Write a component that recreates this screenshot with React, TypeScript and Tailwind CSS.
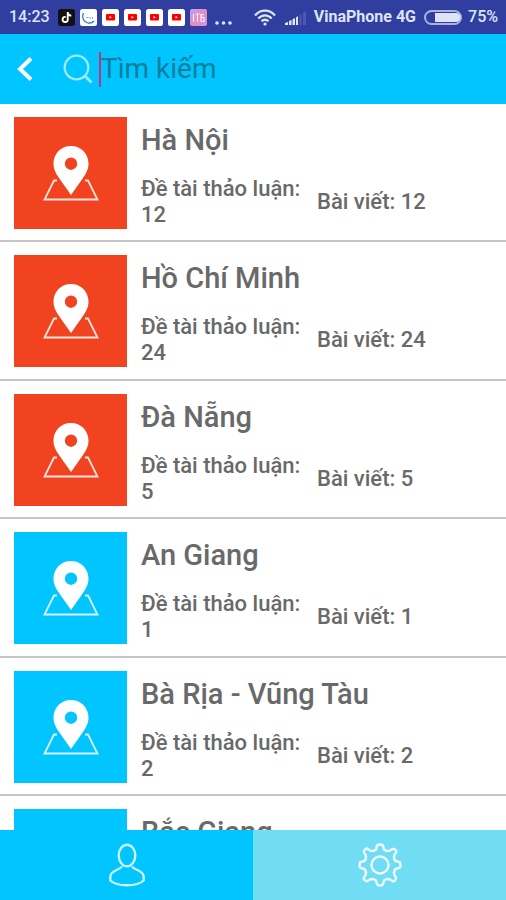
import { FaTiktok } from "react-icons/fa";

type Place = { name: string; topics: number; posts: number; hot?: boolean };

const places: Place[] = [
    { name: "Hà Nội", topics: 12, posts: 12, hot: true },
    { name: "Hồ Chí Minh", topics: 24, posts: 24, hot: true },
    { name: "Đà Nẵng", topics: 5, posts: 5, hot: true },
    { name: "An Giang", topics: 1, posts: 1 },
    { name: "Bà Rịa - Vũng Tàu", topics: 2, posts: 2 },
    { name: "Bắc Giang", topics: 1, posts: 1 },
];

const VideoBadge = () => (
    <svg className="size-[17px]" viewBox="0 0 17 17">
        <rect width="17" height="17" rx="2.5" fill="#fff" />
        <rect x="4" y="5" width="9" height="6.500" rx="1" fill="#f00" />
        <path d="M7.500 7v2.600l2.300-1.300z" fill="#fff" />
    </svg>
);

const StatusBar = () => (
    <div className="flex h-[34px] shrink-0 items-center justify-between bg-[#303f9f] pl-[9px] pr-2 text-base font-bold text-[#dfe3f8]">
        <div className="flex items-center gap-[5px]">
            <span className="mr-[3px] font-medium">14:23</span>
            <span className="flex size-[17px] items-center justify-center rounded-[3px] bg-[#111] text-white">
                <FaTiktok size={11} />
            </span>
            <svg className="size-[17px]" viewBox="0 0 17 17">
                <rect width="17" height="17" rx="2.5" fill="#fff" />
                <path d="M3.500 4C1.500 8 3 12.500 8 14c3 .3 5-.6 6-2" fill="none" stroke="#2b7de0" strokeWidth="1.300" />
                <path d="M6 8.500h2.500M10 8v2M12.500 8v2" fill="none" stroke="#7fb0ee" strokeWidth="1" />
            </svg>
            <VideoBadge />
            <VideoBadge />
            <VideoBadge />
            <VideoBadge />
            <svg className="size-[17px]" viewBox="0 0 17 17">
                <defs>
                    <linearGradient id="pink" x1="0" y1="0" x2="1" y2="1">
                        <stop offset="0" stopColor="#b9a5e6" />
                        <stop offset=".5" stopColor="#e68bc0" />
                        <stop offset="1" stopColor="#c69ae0" />
                    </linearGradient>
                </defs>
                <rect width="17" height="17" rx="2" fill="url(#pink)" />
                <path d="M3.500 5v8M5.500 5h4M7.500 5v8M11 5v8M14 5.500h-2.500v3H14v4h-2.500" fill="none" stroke="#fff" strokeOpacity=".8" strokeWidth="1.200" />
            </svg>
            <svg className="ml-[3px] h-[17px] w-[17px]" viewBox="0 0 17 17" fill="#dfe3f8">
                <circle cx="2" cy="14" r="1.800" />
                <circle cx="8.500" cy="14" r="1.800" />
                <circle cx="15" cy="14" r="1.800" />
            </svg>
        </div>
        <div className="flex items-center">
            <svg className="h-[17px] w-[22px]" viewBox="0 0 22 17" fill="none" stroke="#dfe3f8" strokeWidth="2.300">
                <path d="M1 6.500C6.500 0 15.500 0 21 6.500M4.300 9.500c4-4.300 9.400-4.300 13.400 0M7.500 12.300c2-2.100 5-2.100 7 0" />
                <circle cx="11" cy="15" r="1.600" fill="#dfe3f8" stroke="none" />
            </svg>
            <svg className="ml-[9px] h-[15px] w-[21px]" viewBox="0 0 21 15">
                <path d="M0 15v-2l3-1v3zM4 15v-4l2.500-1v5zM7.500 15V9.300L10 8v7zM11 15V7.500L13 6v9z" fill="#dfe3f8" />
                <path d="M14.500 15V5l2-1v11zM18 15V3l3-2v14z" fill="#4d59b0" />
            </svg>
            <span className="ml-2">VinaPhone 4G</span>
            <svg className="ml-2 h-[15px] w-[38px]" viewBox="0 0 38 15">
                <rect x="1" y="1" width="36" height="13" rx="6.500" fill="none" stroke="#aab2e0" strokeWidth="2" />
                <path d="M11 3h21a4.500 4.500 0 0 1 0 9H11z" fill="#dfe3f8" />
            </svg>
            <span className="ml-[6px] font-medium">75%</span>
        </div>
    </div>
);

const PinIcon = () => (
    <svg className="h-[56px] w-[56px]" viewBox="0 0 56 56">
        <path d="M14 35.500H11L1.500 54.500h53L45 35.500h-3" fill="none" stroke="#fff" strokeOpacity=".85" strokeWidth="1.800" />
        <path
            d="M28 1C18 1 10.500 8.800 10.500 18.500c0 6 2.500 10 5.500 14.500L28 50l12-17c3-4.500 5.500-8.500 5.500-14.500C45.500 8.800 38 1 28 1zm0 11.500a6.200 6.200 0 1 1 0 12.400 6.200 6.200 0 0 1 0-12.400z"
            fill="#fff"
        />
    </svg>
);

const PlaceRow = ({ place }: { place: Place }) => (
    <li className="flex gap-[14px] border-b-2 border-[#c6c6c6] pl-[14px] pr-4 pt-[13px] odd:pb-[11px] even:pb-3">
        <div className={`flex h-[112px] w-[113px] shrink-0 items-center justify-center ${place.hot ? "bg-[#f1431f]" : "bg-[#00c5ff]"}`}>
            <PinIcon />
        </div>
        <div className="flex-1 text-[#696969]">
            <h2 className="pt-[5px] text-[29px] font-medium leading-9">{place.name}</h2>
            <div className="mt-[18px] flex items-center gap-3 text-[22px] font-medium leading-[26px]">
                <p className="w-[164px]">Đề tài thảo luận: {place.topics}</p>
                <p>Bài viết: {place.posts}</p>
            </div>
        </div>
    </li>
);

const App = () => {
    return (
        <div className="flex h-screen flex-col overflow-hidden bg-white font-[Roboto,sans-serif]">
            <StatusBar />
            <header className="flex h-[70px] shrink-0 items-center bg-[#00c5ff] pl-4 pr-4">
                <button aria-label="Quay lại">
                    <svg className="h-[26px] w-[18px]" viewBox="0 0 18 26" fill="none" stroke="#fff" strokeWidth="4">
                        <path d="M15 2.500 4 13l11 10.500" />
                    </svg>
                </button>
                <label className="ml-[29px] flex flex-1 items-center gap-[6px]">
                    <svg className="h-[30px] w-[30px] shrink-0" viewBox="0 0 30 30" fill="none" stroke="#9de9ff" strokeWidth="2.300">
                        <circle cx="13.500" cy="13.500" r="11.800" />
                        <path d="m22 22 6.500 6.500" strokeWidth="2.800" />
                    </svg>
                    <span className="flex flex-1 items-center">
                        <span className="h-[35px] w-[2px] bg-[#c22f86]" />
                        <input
                            type="text"
                            aria-label="Tìm kiếm"
                            placeholder="Tìm kiếm"
                            className="w-full text-[28px] leading-9 outline-none placeholder:text-[#0d7e9c]"
                        />
                    </span>
                </label>
            </header>
            <ul className="min-h-0 flex-1 overflow-hidden">
                {places.map((place) => (
                    <PlaceRow key={place.name} place={place} />
                ))}
            </ul>
            <nav className="grid h-[70px] shrink-0 grid-cols-2">
                <button aria-label="Tài khoản" className="flex items-center justify-center bg-[#00c5ff]">
                    <svg className="h-[44px] w-[38px]" viewBox="0 0 38 44" fill="none" stroke="#c9f6ff" strokeWidth="2.400">
                        <ellipse cx="19" cy="12.500" rx="8.300" ry="10.800" />
                        <path d="M14 23.500C12 27 2.300 27.500 2.300 33.500v4C6 41 12 42.300 19 42.300S32 41 35.700 37.500v-4C35.700 27.500 26 27 24 23.500" />
                    </svg>
                </button>
                <button aria-label="Cài đặt" className="flex items-center justify-center bg-[#70ddf4]">
                    <svg className="h-[44px] w-[44px]" viewBox="0 0 44 44" fill="none" stroke="#effcff" strokeWidth="2.400" strokeLinejoin="round">
                        <circle cx="22" cy="22" r="8.500" />
                        <path d="M18.800 3.500Q19 1.500 22 1.500T25.200 3.500L26 6.500Q29 9 32 7.500L34.500 6Q36 5.500 37.500 7T38 9.500L36.500 12Q35 15 37.500 18L40.500 18.800Q42.500 19 42.500 22T40.500 25.200L37.500 26Q35 29 36.500 32L38 34.500Q38.500 36 37 37.500T34.500 38L32 36.500Q29 35 26 37.500L25.200 40.500Q25 42.500 22 42.500T18.800 40.500L18 37.500Q15 35 12 36.500L9.500 38Q8 38.500 6.500 37T6 34.500L7.500 32Q9 29 6.500 26L3.500 25.200Q1.500 25 1.500 22T3.500 18.800L6.500 18Q9 15 7.500 12L6 9.500Q5.500 8 7 6.500T9.500 6L12 7.500Q15 9 18 6.500Z" />
                    </svg>
                </button>
            </nav>
        </div>
    );
};

export default App;
